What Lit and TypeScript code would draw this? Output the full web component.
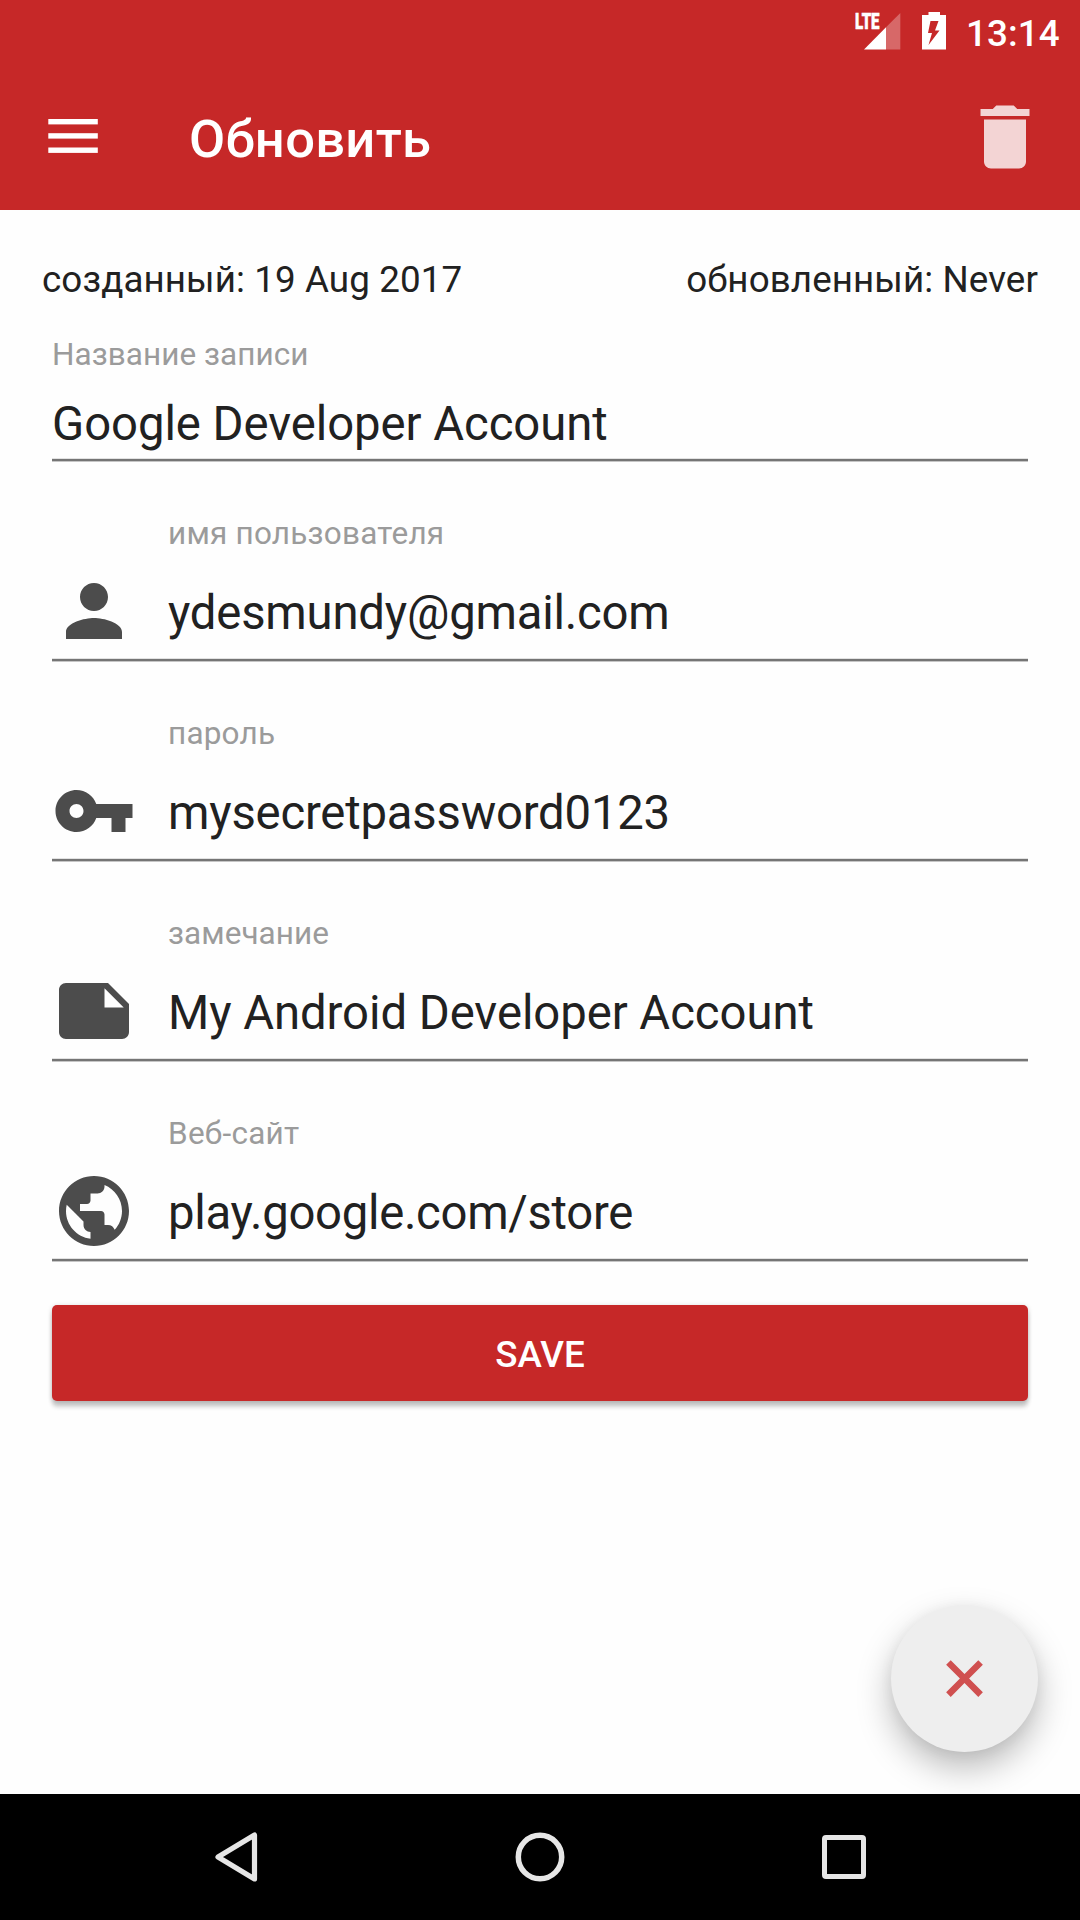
import { LitElement, html, css, svg } from "lit";
import { customElement, property } from "lit/decorators.js";

const ICONS: Record<string, string> = {
  person:
    "M12 12c2.21 0 4-1.79 4-4s-1.79-4-4-4-4 1.79-4 4 1.79 4 4 4zm0 2c-2.67 0-8 1.34-8 4v2h16v-2c0-2.66-5.33-4-8-4z",
  key: "M12.65 10C11.83 7.67 9.61 6 7 6c-3.31 0-6 2.69-6 6s2.69 6 6 6c2.61 0 4.83-1.67 5.65-4H17v4h4v-4h2v-4H12.65zM7 14c-1.1 0-2-.9-2-2s.9-2 2-2 2 .9 2 2-.9 2-2 2z",
  note: "M22 10l-6-6H4c-1.1 0-2 .9-2 2v12.01c0 1.1.9 1.99 2 1.99l16-.01c1.1 0 2-.89 2-1.99v-8zm-7-4.5l5.5 5.5H15V5.5z",
  globe:
    "M12 2C6.48 2 2 6.48 2 12s4.48 10 10 10 10-4.48 10-10S17.52 2 12 2zm-1 17.93c-3.95-.49-7-3.85-7-7.93 0-.62.08-1.21.21-1.79L9 15v1c0 1.1.9 2 2 2v1.93zm6.9-2.54c-.26-.81-1-1.39-1.9-1.39h-1v-3c0-.55-.45-1-1-1H8v-2h2c.55 0 1-.45 1-1V7h2c1.1 0 2-.9 2-2v-.41c2.93 1.19 5 4.06 5 7.41 0 2.08-.8 3.97-2.1 5.39z",
  trash:
    "M6 19c0 1.1.9 2 2 2h8c1.1 0 2-.9 2-2V7H6v12zM19 4h-3.5l-1-1h-5l-1 1H5v2h14V4z",
  close:
    "M19 6.750L17.250 5 12 10.250 6.750 5 5 6.750 10.250 12 5 17.250 6.750 19 12 13.750 17.250 19 19 17.250 13.750 12z",
};

const icon = (name: string) =>
  html`<svg class="icon" viewBox="0 0 24 24">${svg`<path d=${ICONS[name]} />`}</svg>`;

@customElement("form-field")
class FormField extends LitElement {
  @property() label = "";
  @property() value = "";
  @property() icon = "";
  @property({ type: Number, attribute: "label-tracking" }) labelTracking = 0;
  @property({ type: Number, attribute: "value-tracking" }) valueTracking = 0;

  static styles = css`
    :host {
      display: block;
    }
    .field {
      display: flex;
      flex-direction: column;
      padding-top: 53px;
    }
    .label {
      font-size: 31.5px;
      line-height: 37px;
      color: #9b9b9b;
      white-space: nowrap;
    }
    .row {
      display: flex;
      gap: 32px;
      height: 84px;
      margin: 17px 0 5px;
    }
    .icon {
      width: 84px;
      height: 84px;
      fill: #4c4c4c;
    }
    .value {
      font-size: 47.25px;
      line-height: 88px;
      color: #212121;
      white-space: nowrap;
    }
    .with-icon .label {
      padding-left: 116px;
    }
    .plain {
      padding-top: 35px;
    }
    .plain .row {
      height: 56px;
      margin: 23px 0 6px;
    }
    .plain .value {
      line-height: 56px;
    }
    .underline {
      height: 4px;
      background: linear-gradient(#e2e2e2 0 1px, #757575 1px 3px, #c6c6c6 3px 4px);
    }
  `;

  render() {
    return html`<div class="field ${this.icon ? "with-icon" : "plain"}">
      <div class="label" style="letter-spacing:${this.labelTracking}px">${this.label}</div>
      <div class="row">
        ${this.icon ? icon(this.icon) : null}
        <span class="value" style="letter-spacing:${this.valueTracking}px">${this.value}</span>
      </div>
      <div class="underline"></div>
    </div>`;
  }
}

@customElement("app-root")
class AppRoot extends LitElement {
  static styles = css`
    :host {
      display: block;
      font-family: Roboto, sans-serif;
    }
    .screen {
      display: flex;
      flex-direction: column;
      width: 1080px;
      height: 1920px;
      background: #fefefe;
      overflow: hidden;
    }
    .status {
      display: flex;
      justify-content: flex-end;
      height: 63px;
      background: #c62828;
      color: #fff;
    }
    .status-icons {
      width: 100px;
      height: 63px;
      margin-right: 13px;
    }
    .clock {
      font-size: 36.75px;
      font-weight: 500;
      line-height: 67px;
      width: 114px;
      letter-spacing: 0.1px;
    }
    .toolbar {
      display: flex;
      align-items: center;
      height: 147px;
      background: #c62828;
      color: #fff;
    }
    .menu {
      width: 50px;
      height: 36px;
      margin-left: 48px;
    }
    .title {
      flex: 1;
      margin-left: 91px;
      padding-top: 4px;
      font-size: 52.5px;
      font-weight: 500;
      line-height: 62px;
      letter-spacing: 0.3px;
    }
    .delete {
      display: flex;
      margin-right: 33px;
      opacity: 0.8;
    }
    .delete .icon {
      width: 84px;
      height: 84px;
      fill: #fff;
    }
    .content {
      flex: 1;
      display: flex;
      flex-direction: column;
      position: relative;
      padding: 48px 52px 0;
    }
    .meta {
      display: flex;
      justify-content: space-between;
      margin: 0 -10px;
      font-size: 36.75px;
      line-height: 43px;
      letter-spacing: 0.1px;
      color: #212121;
    }
    .save {
      margin-top: 43px;
      height: 96px;
      box-sizing: border-box;
      padding: 3px 0 0;
      border: 0;
      border-radius: 5px;
      background: #c62828;
      color: #fff;
      font: 500 36.75px Roboto, sans-serif;
      box-shadow: 0 6px 4px rgba(0, 0, 0, 0.19), 0 1px 5px rgba(0, 0, 0, 0.18);
    }
    .fab {
      position: absolute;
      right: 42px;
      bottom: 42px;
      display: flex;
      align-items: center;
      justify-content: center;
      width: 147px;
      height: 147px;
      padding: 0;
      border: 0;
      border-radius: 50%;
      background: #eee;
      box-shadow: 0 16px 34px rgba(0, 0, 0, 0.27), 0 2px 14px rgba(0, 0, 0, 0.05);
    }
    .fab .icon {
      width: 63px;
      height: 63px;
      fill: #d05050;
    }
    .nav {
      position: relative;
      height: 126px;
      background: #000;
    }
    .nav svg {
      display: block;
      fill: none;
      stroke: #e6e6e6;
    }
  `;

  render() {
    return html`<div class="screen">
      <div class="status">
        <svg class="status-icons" viewBox="853 0 100 63" fill="#fff">
          <text
            x="855"
            y="29"
            font-size="21.5"
            font-weight="900"
            stroke="#fff"
            stroke-width="0.6"
            textLength="24.5"
            lengthAdjust="spacingAndGlyphs"
          >LTE</text>
          <path d="M864 49.5 886 27.3V49.5z" />
          <path d="M886 27.3 900.3 13V49.5H886z" opacity="0.3" />
          <path
            fill-rule="evenodd"
            d="M928.5 12H940v3h6v34.5h-24V15h6.5zM930.5 21l-2.500 12h4l-3.500 12 11-14.500h-4.500l3.500-9.500z"
          />
        </svg>
        <span class="clock">13:14</span>
      </div>
      <header class="toolbar">
        <svg class="menu" viewBox="0 0 50 36" fill="#fff">
          <rect x="0.3" y="0" width="49.5" height="5.4" />
          <rect x="0.3" y="14.2" width="49.5" height="5.4" />
          <rect x="0.3" y="28.5" width="49.5" height="5.4" />
        </svg>
        <span class="title">Обновить</span>
        <span class="delete">${icon("trash")}</span>
      </header>
      <main class="content">
        <div class="meta">
          <span>созданный: 19 Aug 2017</span>
          <span>обновленный: Never</span>
        </div>
        <form-field
          label="Название записи"
          value="Google Developer Account"
          label-tracking="0.05"
          value-tracking="-0.05"
        ></form-field>
        <form-field
          icon="person"
          label="имя пользователя"
          value="ydesmundy@gmail.com"
          label-tracking="0.22"
          value-tracking="-0.2"
        ></form-field>
        <form-field
          icon="key"
          label="пароль"
          value="mysecretpassword0123"
          label-tracking="0.2"
          value-tracking="-0.2"
        ></form-field>
        <form-field
          icon="note"
          label="замечание"
          value="My Android Developer Account"
          label-tracking="0.05"
          value-tracking="-0.05"
        ></form-field>
        <form-field
          icon="globe"
          label="Веб-сайт"
          value="play.google.com/store"
          label-tracking="0.25"
          value-tracking="-0.3"
        ></form-field>
        <button class="save">SAVE</button>
        <button class="fab">${icon("close")}</button>
      </main>
      <nav class="nav">
        <svg width="1080" height="126" viewBox="0 1794 1080 126">
          <path d="M254.5 1835V1879L218 1857z" stroke-width="5.2" stroke-linejoin="round" />
          <circle cx="540" cy="1857" r="21.7" stroke-width="5.5" />
          <rect x="824.5" y="1837.5" width="39" height="39" rx="1.5" stroke-width="5" />
        </svg>
      </nav>
    </div>`;
  }
}
